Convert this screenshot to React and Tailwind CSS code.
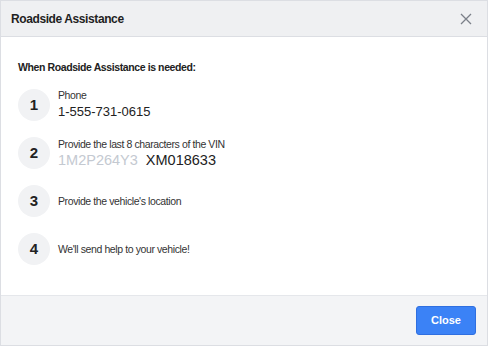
import React from 'react';

const steps = [
  { n: '1', label: 'Phone', value: <span className="text-[13px] text-[#222]">1-555-731-0615</span> },
  {
    n: '2',
    label: 'Provide the last 8 characters of the VIN',
    value: (
      <span className="text-[14.5px]">
        <span className="text-[#c4c9d1]">1M2P264Y3</span>
        <span className="ml-[8px] text-[#222]">XM018633</span>
      </span>
    ),
  },
  { n: '3', label: "Provide the vehicle's location" },
  { n: '4', label: "We'll send help to your vehicle!" },
];

const App = () => {
  return (
    <div className="w-[488px] h-[346px] flex flex-col border border-[#dcdee3] bg-white font-['Liberation_Sans',Arial,sans-serif] text-[#222]">
      {/* header */}
      <div className="h-[36px] shrink-0 flex items-center justify-between pl-[10px] pr-[15px] bg-[#eff0f2] border-b border-[#dcdee3]">
        <h2 className="text-[12px] font-bold tracking-[-0.4px] text-[#1f1f1f]">Roadside Assistance</h2>
        <button type="button" className="text-[#7b8089]">
          <svg width="12" height="12" viewBox="0 0 12 12" fill="none" stroke="currentColor" strokeWidth="1.3">
            <path d="M1 1L11 11M11 1L1 11" />
          </svg>
        </button>
      </div>

      {/* body */}
      <div className="flex-1 px-[17px] pt-[23px]">
        <p className="text-[10.5px] font-bold tracking-[-0.4px] leading-[14px]">When Roadside Assistance is needed:</p>
        <div className="mt-[15px] flex flex-col gap-[16px]">
          {steps.map((s) => (
            <div key={s.n} className="flex items-center gap-[8px]">
              <div className="w-[32px] h-[32px] rounded-full bg-[#f1f2f4] flex items-center justify-center text-[15px] font-bold">
                {s.n}
              </div>
              <div className="flex flex-col">
                <span className="text-[10.5px] tracking-[-0.4px] leading-[13px] text-[#333]">{s.label}</span>
                {s.value && <span className="leading-[18px]">{s.value}</span>}
              </div>
            </div>
          ))}
        </div>
      </div>

      {/* footer */}
      <div className="h-[50px] shrink-0 flex items-center justify-end pr-[11px] bg-[#f3f4f6] border-t border-[#e5e7eb]">
        <button
          type="button"
          className="w-[60px] h-[29px] rounded-[3px] bg-[#3b82f6] border border-[#2f6fe0] text-white text-[11px] font-bold"
        >
          Close
        </button>
      </div>
    </div>
  );
};

export default App;
